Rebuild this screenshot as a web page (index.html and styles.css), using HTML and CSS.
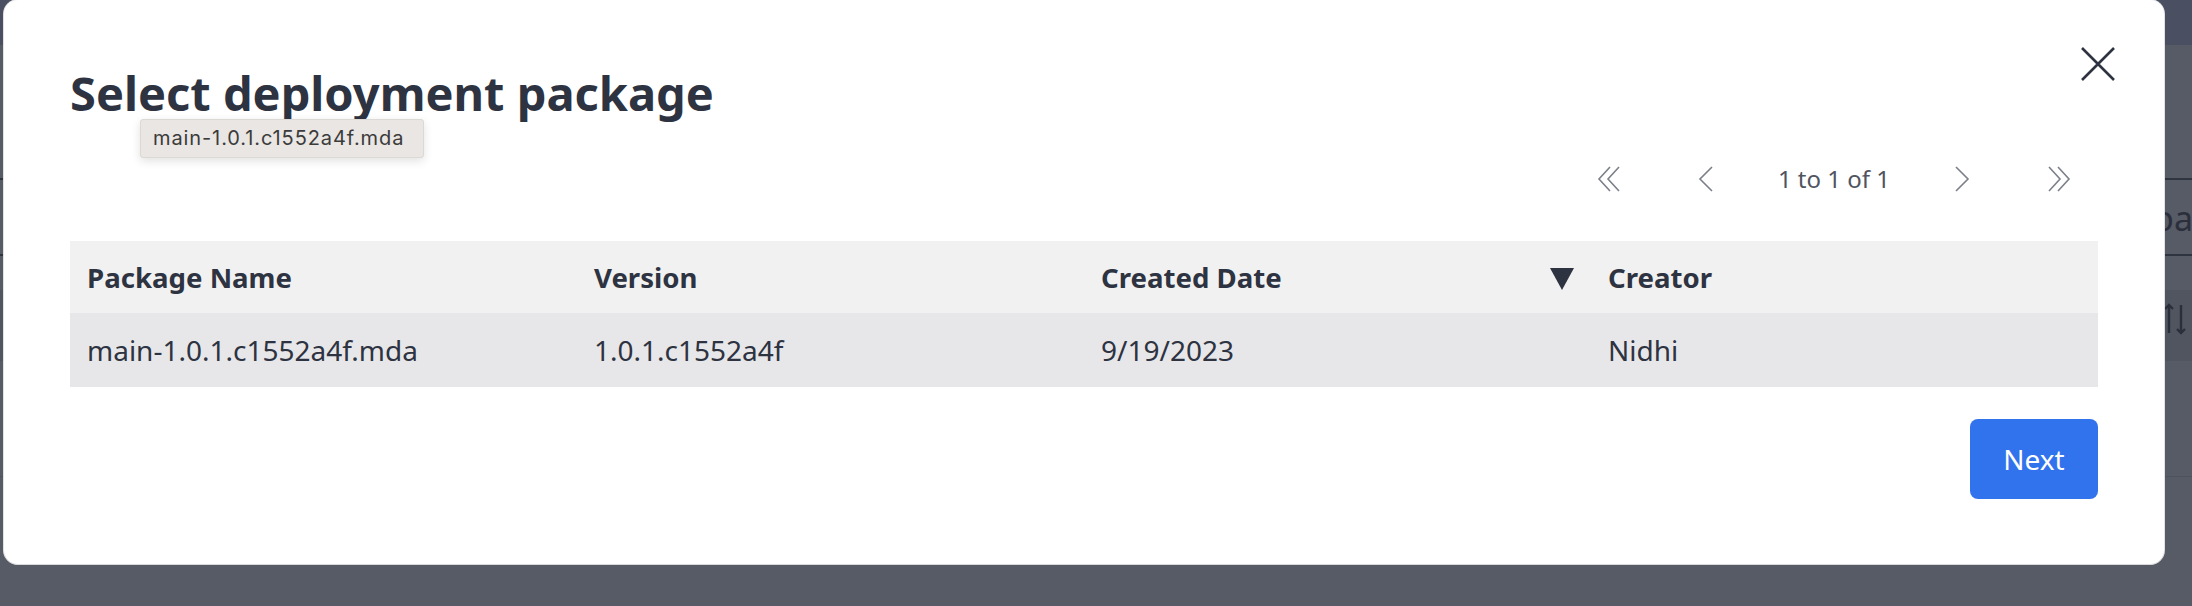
FILE: index.html
```html
<!DOCTYPE html>
<html lang="en">
<head>
<meta charset="utf-8">
<title>Select deployment package</title>
<link rel="stylesheet" href="styles.css">
</head>
<body>
<div class="page">
  <div class="topbar"></div>
  <div class="band"></div>
  <div class="search"><span class="search-text">Downloa</span></div>
  <div class="spacer"></div>
  <div class="thead-bg">
    <svg class="sort-glyph" width="24" height="32" viewBox="0 0 24 32"><path d="M5 2 V30 M1 6 L5 2 L9 6 M17 2 V30 M13 26 L17 30 L21 26" fill="none" stroke="#2b2f3c" stroke-width="2.4"/></svg>
  </div>
  <div class="row-bg"></div>
</div>

<div class="modal">
  <button class="close" aria-label="Close">
    <svg width="36" height="34" viewBox="0 0 36 34"><path d="M2 1 L34 33 M34 1 L2 33" stroke="#2e3342" stroke-width="2.6" fill="none"/></svg>
  </button>
  <h1 class="title">Select deployment package</h1>
  <div class="tooltip">main-1.0.1.c1552a4f.mda</div>

  <div class="pager">
    <span class="pbtn"><svg width="26" height="26" viewBox="0 0 26 26"><polyline points="13,1 2,13 13,25" /><polyline points="22,1 11,13 22,25" /></svg></span>
    <span class="pbtn"><svg width="26" height="26" viewBox="0 0 26 26"><polyline points="19,1 7,13 19,25" /></svg></span>
    <span class="ptext">1 to 1 of 1</span>
    <span class="pbtn"><svg width="26" height="26" viewBox="0 0 26 26"><polyline points="7,1 19,13 7,25" /></svg></span>
    <span class="pbtn"><svg width="26" height="26" viewBox="0 0 26 26"><polyline points="4,1 15,13 4,25" /><polyline points="13,1 24,13 13,25" /></svg></span>
  </div>

  <div class="table">
    <div class="tr thead">
      <div class="td">Package Name</div>
      <div class="td">Version</div>
      <div class="td sorted">Created Date<svg class="tri" width="24" height="22" viewBox="0 0 24 22"><polygon points="0,0 24,0 12,22" fill="#2e3342"/></svg></div>
      <div class="td">Creator</div>
    </div>
    <div class="tr tbody">
      <div class="td">main-1.0.1.c1552a4f.mda</div>
      <div class="td">1.0.1.c1552a4f</div>
      <div class="td">9/19/2023</div>
      <div class="td">Nidhi</div>
    </div>
  </div>

  <div class="actions">
    <button class="next">Next</button>
  </div>
</div>
</body>
</html>
```

FILE: styles.css
```css
* { box-sizing: border-box; }
html, body {
  margin: 0;
  padding: 0;
}
body {
  width: 2192px;
  height: 606px;
  overflow: hidden;
  position: relative;
  background: #575b66;
  font-family: "Noto Sans", "Open Sans", sans-serif;
}

/* underlying page (dimmed) */
.page { width: 100%; }
.topbar { height: 45px; background: #4a5061; }
.band { height: 133px; }
.search {
  height: 78px;
  border-top: 2px solid #2f3441;
  border-bottom: 2px solid #2f3441;
  display: flex;
  align-items: center;
  justify-content: flex-end;
  padding-top: 2px;
}
.search-text {
  font-size: 34px;
  color: #2b2f3c;
  margin-right: -1px;
}
.spacer { height: 34px; }
.thead-bg {
  height: 71px;
  background: #51555f;
  display: flex;
  justify-content: flex-end;
  align-items: flex-start;
  padding-top: 13px;
  padding-right: 4px;
}
.sort-glyph { display: block; }
.row-bg {
  height: 116px;
  border-bottom: 1px solid #4e525d;
}

/* modal */
.modal {
  position: absolute;
  left: 4px;
  top: 0;
  width: 2160px;
  height: 564px;
  background: #ffffff;
  border-radius: 14px;
  box-shadow: 0 1px 0 #d9d9d9, 0 0 0 1px #e2e2e2;
  padding: 64px 66px 0 66px;
  color: #2e3342;
}
.close {
  position: absolute;
  right: 48px;
  top: 47px;
  width: 36px;
  height: 34px;
  padding: 0;
  border: 0;
  background: transparent;
  display: block;
}
.close svg { display: block; }
.title {
  margin: 0;
  font-size: 47px;
  line-height: 58px;
  font-weight: 700;
  color: #2e3342;
}
.tooltip {
  position: absolute;
  left: 136px;
  top: 119px;
  width: 284px;
  height: 39px;
  padding-left: 12px;
  background: #e9e6e3;
  border: 1px solid #dcd8d4;
  border-radius: 3px;
  box-shadow: 0 3px 10px rgba(0, 0, 0, 0.12);
  font-family: "Inter", "Liberation Sans", sans-serif;
  font-size: 20px;
  letter-spacing: 0.9px;
  line-height: 37px;
  color: #3b3b3b;
  white-space: nowrap;
}

.pager {
  margin-top: 37px;
  height: 40px;
  display: flex;
  justify-content: flex-end;
  align-items: center;
  gap: 48px;
  padding-right: 16px;
}
.pbtn {
  width: 48px;
  height: 40px;
  display: flex;
  align-items: center;
  justify-content: center;
}
.pbtn svg { display: block; }
.pbtn polyline {
  fill: none;
  stroke: #7b7f89;
  stroke-width: 1.6;
}
.ptext {
  font-size: 24px;
  color: #50545f;
  line-height: 32px;
}

.table {
  margin-top: 42px;
}
.tr {
  display: grid;
  grid-template-columns: repeat(4, 1fr);
}
.thead {
  height: 72px;
  background: #f1f1f1;
  font-weight: 700;
}
.thead .td { font-size: 27.6px; }
.tbody {
  height: 74px;
  background: #e7e7e9;
}
.td {
  display: flex;
  align-items: center;
  padding-left: 17px;
  padding-right: 17px;
  font-size: 28px;
  color: #2e3342;
  white-space: nowrap;
}
.sorted { justify-content: space-between; }
.tri { display: block; margin-top: 3px; }

.actions {
  margin-top: 32px;
  display: flex;
  justify-content: flex-end;
}
.next {
  width: 128px;
  height: 80px;
  border: 0;
  border-radius: 8px;
  background: #3173ec;
  color: #ffffff;
  font-family: "Noto Sans", "Open Sans", sans-serif;
  font-size: 28px;
  padding: 0;
}
```
